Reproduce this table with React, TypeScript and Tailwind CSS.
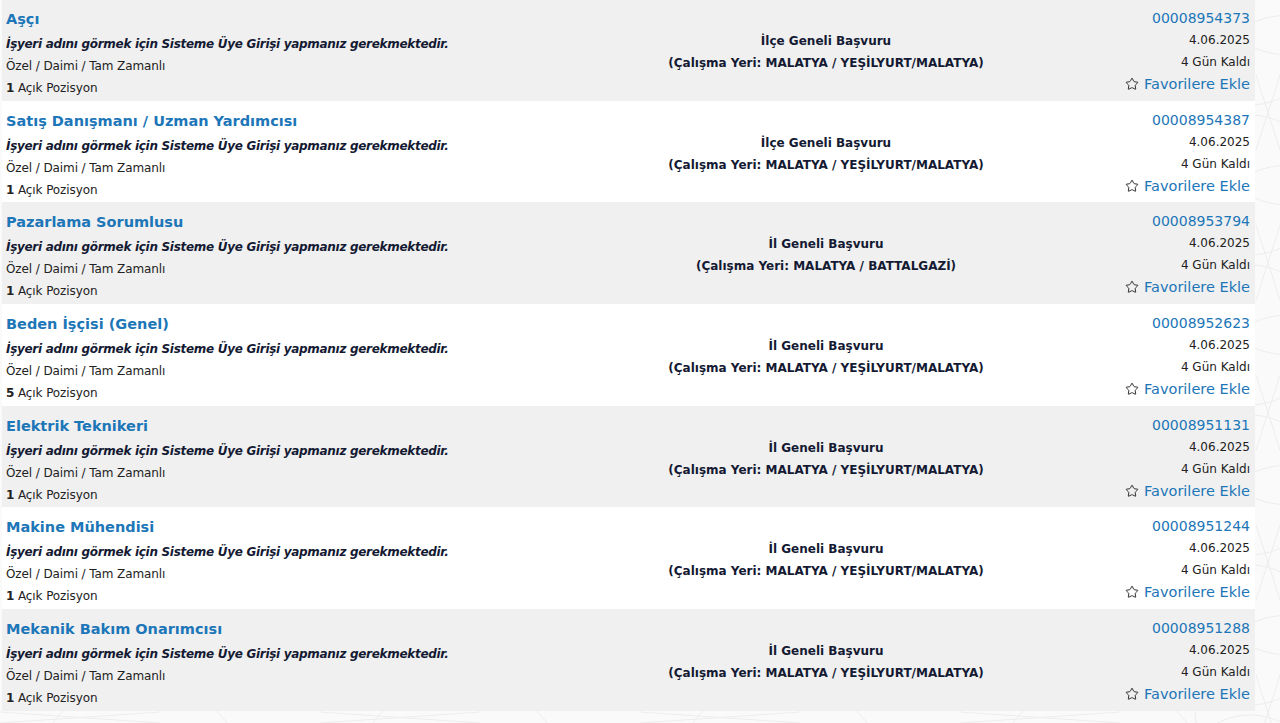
import React from "react";
import { Star } from "lucide-react";

const ilanlar = [
  { id: "00008954373", title: "Aşçı", scope: "İlçe Geneli Başvuru", place: "(Çalışma Yeri: MALATYA / YEŞİLYURT/MALATYA)", count: 1 },
  { id: "00008954387", title: "Satış Danışmanı / Uzman Yardımcısı", scope: "İlçe Geneli Başvuru", place: "(Çalışma Yeri: MALATYA / YEŞİLYURT/MALATYA)", count: 1 },
  { id: "00008953794", title: "Pazarlama Sorumlusu", scope: "İl Geneli Başvuru", place: "(Çalışma Yeri: MALATYA / BATTALGAZİ)", count: 1 },
  { id: "00008952623", title: "Beden İşçisi (Genel)", scope: "İl Geneli Başvuru", place: "(Çalışma Yeri: MALATYA / YEŞİLYURT/MALATYA)", count: 5 },
  { id: "00008951131", title: "Elektrik Teknikeri", scope: "İl Geneli Başvuru", place: "(Çalışma Yeri: MALATYA / YEŞİLYURT/MALATYA)", count: 1 },
  { id: "00008951244", title: "Makine Mühendisi", scope: "İl Geneli Başvuru", place: "(Çalışma Yeri: MALATYA / YEŞİLYURT/MALATYA)", count: 1 },
  { id: "00008951288", title: "Mekanik Bakım Onarımcısı", scope: "İl Geneli Başvuru", place: "(Çalışma Yeri: MALATYA / YEŞİLYURT/MALATYA)", count: 1 },
];

// soluk arka plan deseni
const Pattern = () => (
  <svg className="absolute inset-0 w-full h-full pointer-events-none" viewBox="0 0 1280 723" preserveAspectRatio="none">
    <g fill="none" stroke="#ededed" strokeWidth="1">
      {[0, 1, 2, 3, 4, 5].map((i) => (
        <g key={i}>
          <circle cx={1290} cy={i * 150 - 40} r={95} />
          <circle cx={1250} cy={i * 150 + 35} r={70} />
          <line x1={1256} y1={i * 150 - 75} x2={1280} y2={i * 150} />
          <line x1={1280} y1={i * 150 - 75} x2={1256} y2={i * 150} />
        </g>
      ))}
      {[0, 1, 2, 3, 4].map((i) => (
        <g key={"b" + i}>
          <circle cx={140 + i * 320} cy={790} r={110} />
          <line x1={i * 320} y1={712} x2={i * 320 + 160} y2={723} />
          <line x1={i * 320 + 160} y1={712} x2={i * 320} y2={723} />
        </g>
      ))}
    </g>
  </svg>
);

const IlanRow = ({ item, odd }: { item: (typeof ilanlar)[number]; odd: boolean }) => {
  return (
    <div className={`${odd ? "bg-[#f0f0f0]" : "bg-white"} h-[101.7px] flex pl-1 pr-[5px]`}>
      <div className="flex-1 flex flex-col pt-[7px]">
        <a className="text-[#1c76b8] text-[14.5px] font-bold leading-[27px]">{item.title}</a>
        <span className="text-[#141a33] text-[12px] font-bold italic leading-[22px] tracking-[-0.3px]">
          İşyeri adını görmek için Sisteme Üye Girişi yapmanız gerekmektedir.
        </span>
        <span className="text-[#222] text-[12px] leading-[22px] tracking-[-0.1px]">Özel / Daimi / Tam Zamanlı</span>
        <span className="text-[#222] text-[12px] leading-[22px] tracking-[-0.1px]">
          <b>{item.count}</b> Açık Pozisyon
        </span>
      </div>
      <div className="w-[400px] flex flex-col items-center pt-[31px] text-[12px] font-bold leading-[22px] text-[#141a33]">
        <span>{item.scope}</span>
        <span>{item.place}</span>
      </div>
      <div className="w-[224px] flex flex-col items-end pt-2 leading-[22px]">
        <a className="text-[#1c76b8] text-[14px]">{item.id}</a>
        <span className="text-[#222] text-[12px]">4.06.2025</span>
        <span className="text-[#222] text-[12px]">4 Gün Kaldı</span>
        <a className="text-[#1c76b8] text-[14.5px] flex items-center gap-[5px]">
          <Star size={14} strokeWidth={1.6} className="text-[#222]" />
          Favorilere Ekle
        </a>
      </div>
    </div>
  );
};

export default function App() {
  return (
    <div className="relative w-[1280px] h-[723px] overflow-hidden bg-[#fafafa] font-['Tahoma','DejaVu_Sans',Verdana,sans-serif]">
      <Pattern />
      <div className="relative w-[1253px] ml-[2px] -mt-px">
        {ilanlar.map((item, i) => (
          <IlanRow key={item.id} item={item} odd={i % 2 === 0} />
        ))}
      </div>
    </div>
  );
}
